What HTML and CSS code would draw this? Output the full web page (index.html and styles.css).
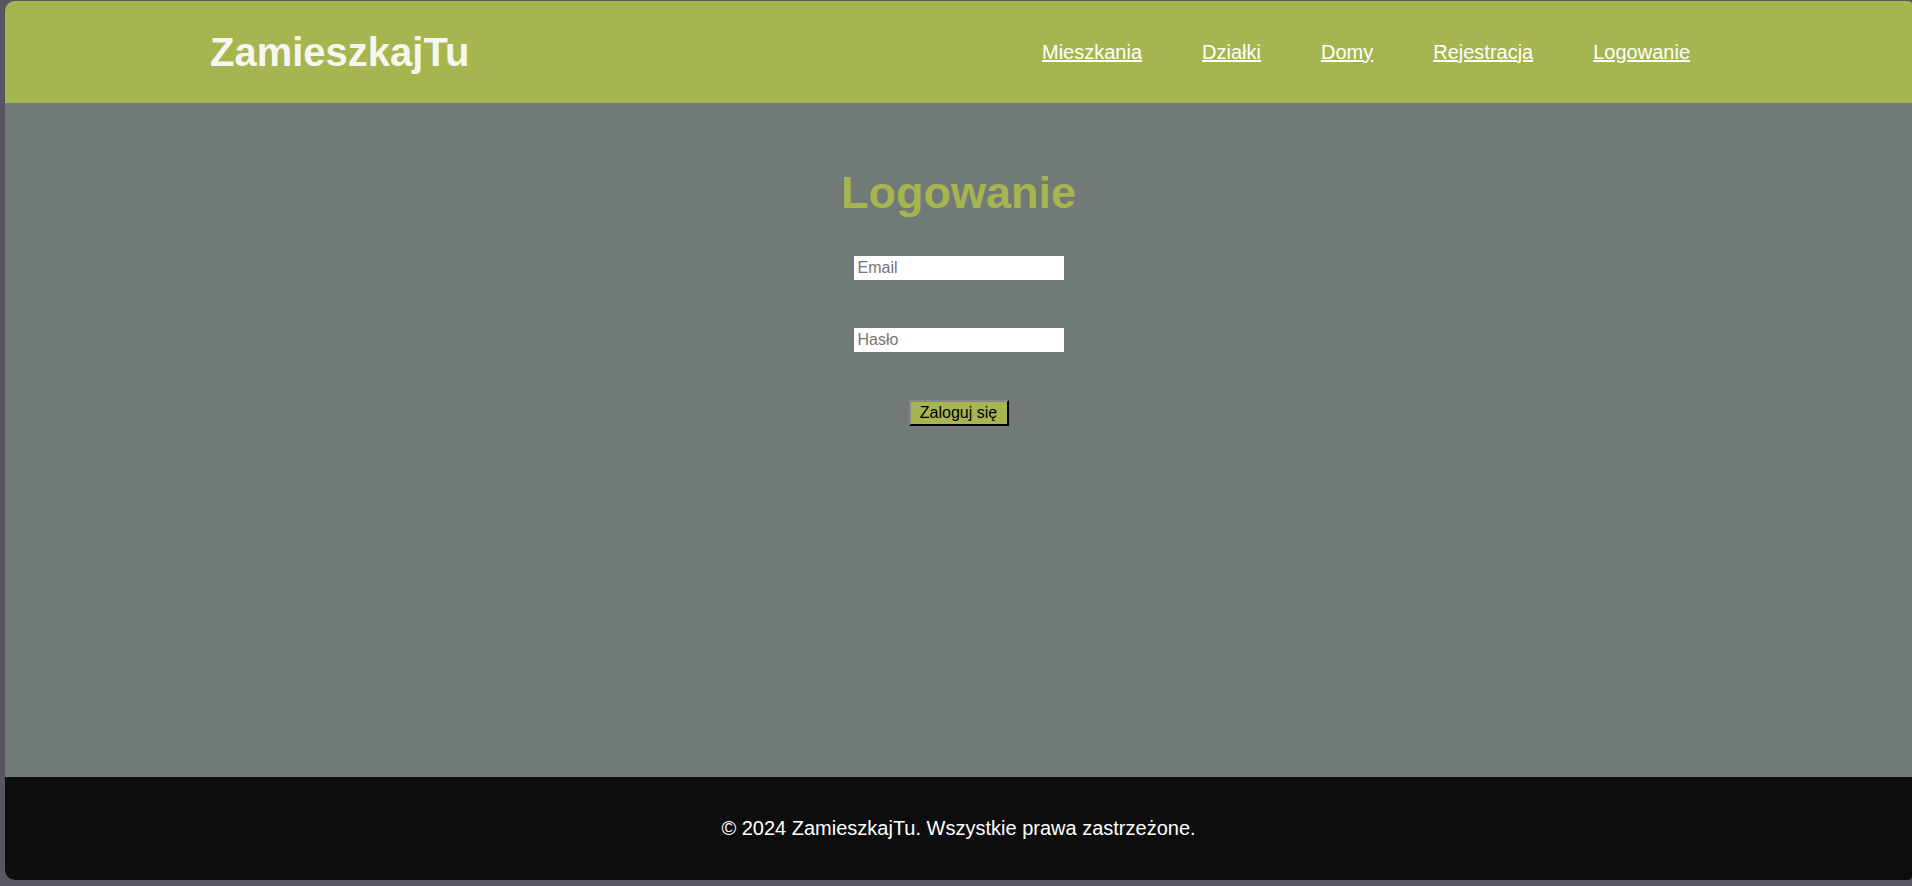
FILE: index.html
```html
<!DOCTYPE html>
<html lang="pl">
<head>
<meta charset="utf-8">
<title>Logowanie - ZamieszkajTu</title>
<link rel="stylesheet" href="styles.css">
</head>
<body>
<div class="window">
  <header class="site-header">
    <div class="logo">ZamieszkajTu</div>
    <nav class="nav">
      <a href="#">Mieszkania</a>
      <a href="#">Działki</a>
      <a href="#">Domy</a>
      <a href="#">Rejestracja</a>
      <a href="#">Logowanie</a>
    </nav>
  </header>
  <main class="content">
    <h1 class="title">Logowanie</h1>
    <form class="login-form">
      <input class="field" type="email" placeholder="Email">
      <input class="field" type="password" placeholder="Hasło">
      <button class="submit" type="button">Zaloguj się</button>
    </form>
  </main>
  <footer class="site-footer">
    <p>© 2024 ZamieszkajTu. Wszystkie prawa zastrzeżone.</p>
  </footer>
</div>
</body>
</html>
```
FILE: styles.css
```css
html, body {
  margin: 0;
  padding: 0;
  height: 100%;
  overflow: hidden;
}
body {
  background: #56565f;
  font-family: "Liberation Sans", Arial, sans-serif;
}
.window {
  margin: 1px 0 0 5px;
  height: 879px;
  border-radius: 10px 4px 4px 10px;
  overflow: hidden;
  display: flex;
  flex-direction: column;
  background: #717a76;
}
.site-header {
  flex: 0 0 102px;
  background: #a6b550;
  display: flex;
  align-items: center;
  justify-content: space-between;
  padding: 0 222px 0 205px;
  box-sizing: border-box;
}
.logo {
  color: #f6f6f0;
  font-weight: bold;
  font-size: 40px;
}
.nav {
  display: flex;
  gap: 60px;
}
.nav a {
  color: #ffffff;
  font-size: 20px;
  text-decoration: underline;
}
.content {
  flex: 1;
  display: flex;
  flex-direction: column;
  align-items: center;
  padding-top: 64px;
}
.title {
  margin: 0;
  color: #a6b550;
  font-size: 45px;
  font-weight: bold;
}
.login-form {
  display: flex;
  flex-direction: column;
  align-items: center;
  gap: 48px;
  margin-top: 37px;
}
.field {
  width: 210px;
  height: 24px;
  box-sizing: border-box;
  border: none;
  padding: 0 4px;
  background: #ffffff;
  font-family: "Liberation Sans", Arial, sans-serif;
  font-size: 16px;
}
.field::placeholder {
  color: #757575;
}
.submit {
  width: 100px;
  height: 26px;
  box-sizing: border-box;
  background: #a6b550;
  border: 2px outset #333333;
  color: #000000;
  font-family: "Liberation Sans", Arial, sans-serif;
  font-size: 16px;
  padding: 0;
}
.site-footer {
  flex: 0 0 103px;
  background: #0d0d0d;
  display: flex;
  align-items: center;
  justify-content: center;
}
.site-footer p {
  margin: 0;
  color: #ffffff;
  font-size: 20px;
}
```
